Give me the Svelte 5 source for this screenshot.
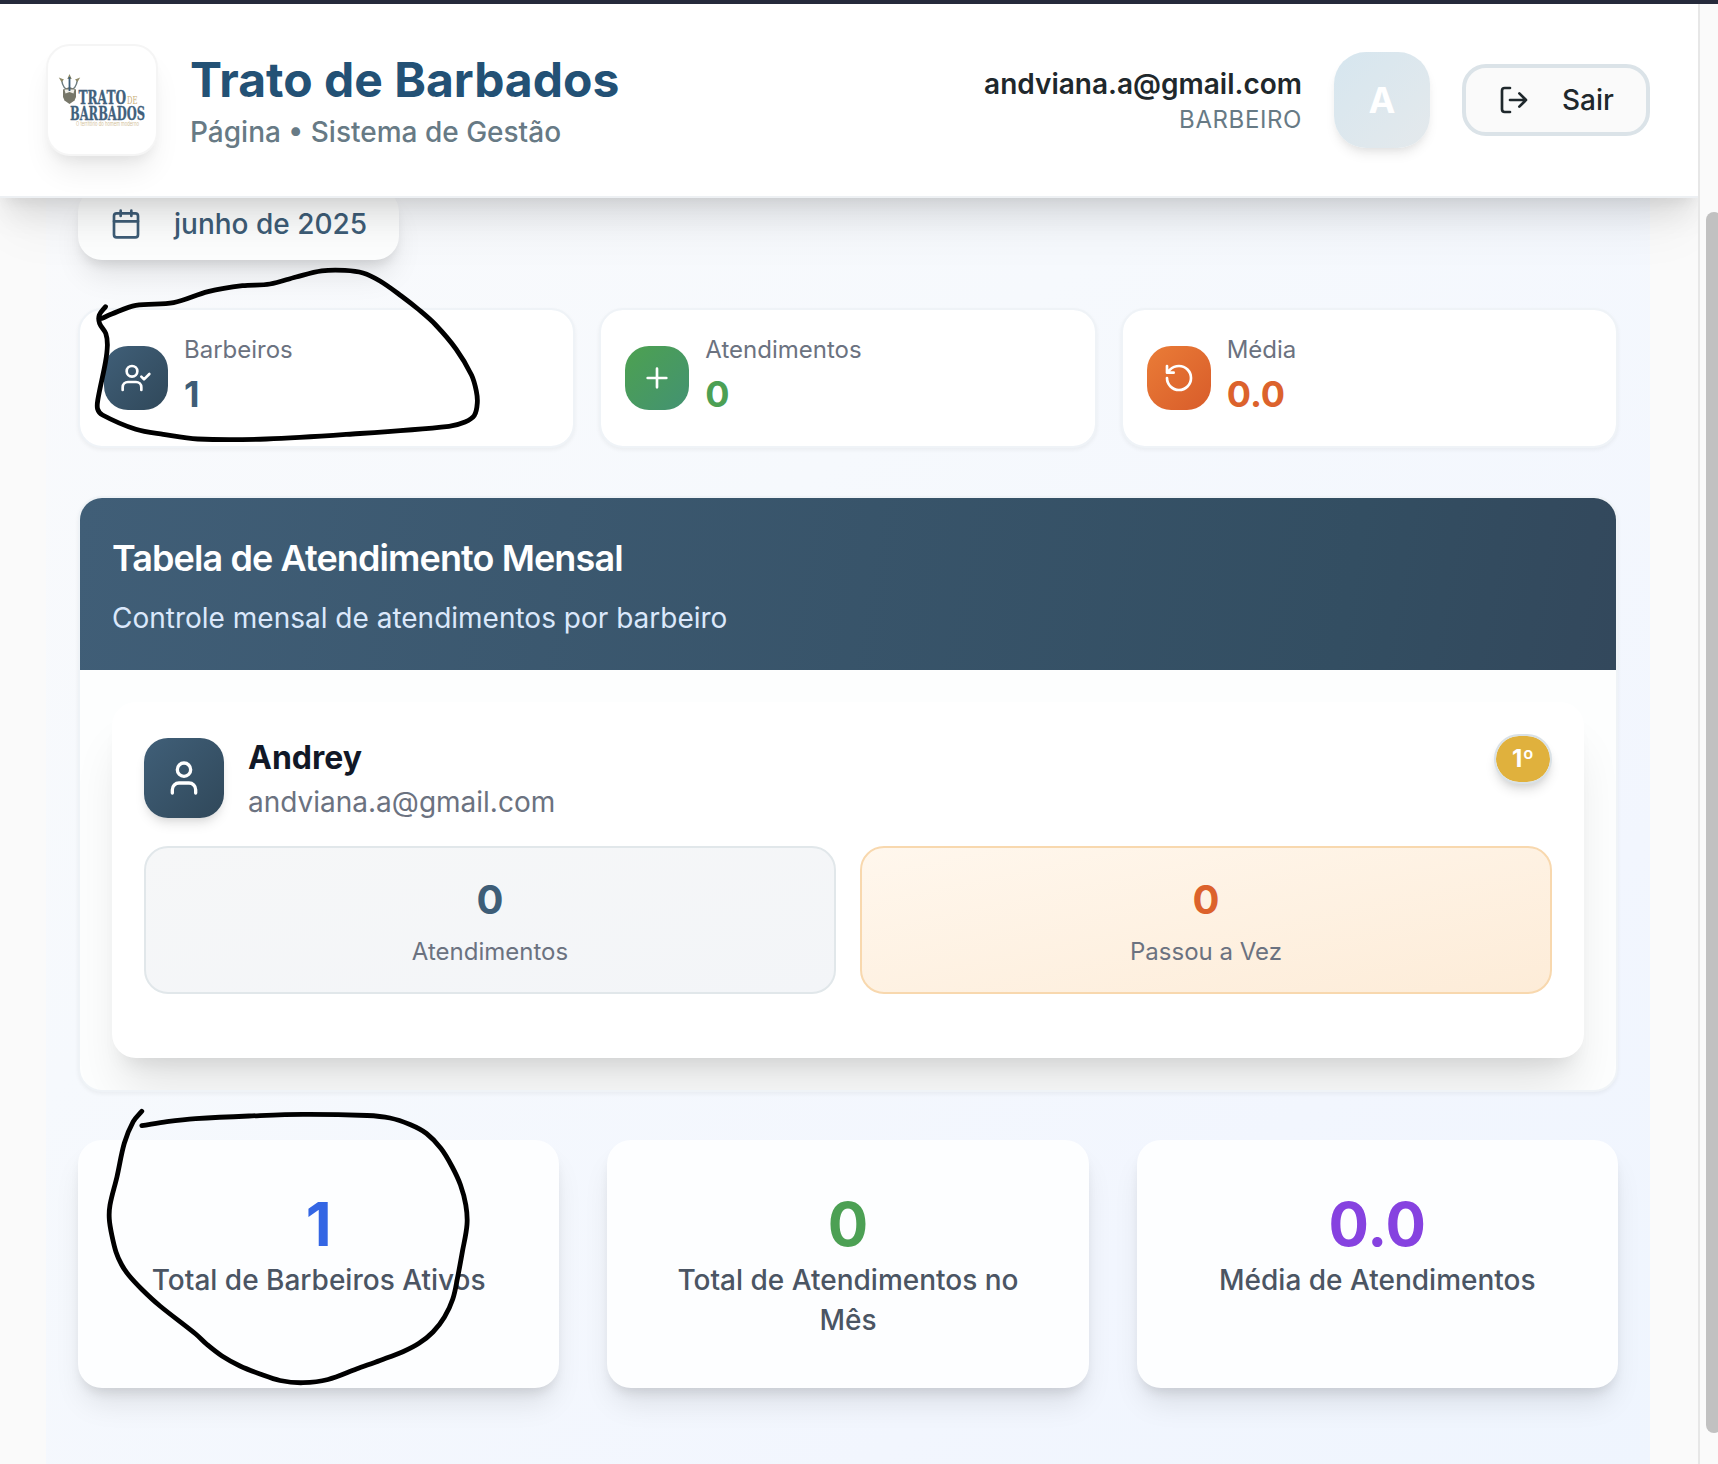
<script>
  const stats = [
    { label: 'Barbeiros', value: '1', tone: 'navy', icon: 'userCheck' },
    { label: 'Atendimentos', value: '0', tone: 'green', icon: 'plus' },
    { label: 'Média', value: '0.0', tone: 'orange', icon: 'rotate' }
  ];

  const totals = [
    { label: 'Total de Barbeiros Ativos', value: '1', tone: 'blue' },
    { label: 'Total de Atendimentos no Mês', value: '0', tone: 'green' },
    { label: 'Média de Atendimentos', value: '0.0', tone: 'purple' }
  ];

  // Freehand pen strokes drawn over the page
  const strokes = [
    [[105.5, 306.7], [99.3, 315], [99.6, 323.5], [105.8, 333.5], [107.4, 345], [105.5, 362], [97.8, 400], [97.6, 409], [102.5, 415], [135.8, 429.3], [163.3, 434.3], [197.7, 439], [266.6, 439], [352.7, 434], [449, 426.3], [465, 422], [474.3, 415.500], [477.3, 403], [476.3, 391], [471.5, 375], [456, 349], [435.3, 324.500], [418, 309], [401, 295.700], [380, 281], [363, 273], [345, 270.4], [321.7, 270.9], [296, 277], [270, 284], [242.5, 285.7], [208, 291.7], [173.6, 302.7], [135.8, 305.3], [111.7, 314], [102, 318.3]],
    [[141.8, 1111.3], [133.2, 1121.7], [124.3, 1143.3], [117, 1176.7], [110, 1205], [109.3, 1219], [111.8, 1235], [116, 1252], [121.500, 1264.500], [129, 1275.500], [142, 1289.500], [160, 1306], [195.7, 1334], [207, 1344.500], [222, 1356], [240, 1366], [260, 1374], [280, 1380.500], [303, 1382.700], [328, 1379.500], [356.4, 1369], [380, 1360.500], [402.9, 1351.7], [419, 1343.300], [433, 1332], [444.500, 1317], [452.800, 1299], [457.500, 1278], [462.500, 1251], [467, 1224.500], [465.800, 1205], [460.500, 1185], [452, 1166.500], [441, 1148.500], [426.500, 1133.500], [410, 1124.500], [390, 1118], [367, 1115.500], [302.9, 1114.300], [249, 1116], [195.7, 1118.7], [167, 1121.700], [141.8, 1125.7]]
  ];

  // Smooth curve through the points (Catmull-Rom converted to cubic Béziers)
  function smooth(p) {
    let d = `M${p[0][0]} ${p[0][1]}`;
    for (let i = 0; i < p.length - 1; i++) {
      const a = p[i - 1] ?? p[i];
      const b = p[i];
      const c = p[i + 1];
      const e = p[i + 2] ?? c;
      const len = Math.hypot(c[0] - b[0], c[1] - b[1]);
      const t1 = len / (len + Math.hypot(b[0] - a[0], b[1] - a[1]));
      const t2 = len / (len + Math.hypot(e[0] - c[0], e[1] - c[1]));
      const c1 = [b[0] + ((c[0] - a[0]) * t1) / 3, b[1] + ((c[1] - a[1]) * t1) / 3];
      const c2 = [c[0] - ((e[0] - b[0]) * t2) / 3, c[1] - ((e[1] - b[1]) * t2) / 3];
      d += `C${c1[0].toFixed(1)} ${c1[1].toFixed(1)} ${c2[0].toFixed(1)} ${c2[1].toFixed(1)} ${c[0]} ${c[1]}`;
    }
    return d;
  }
</script>

<div class="window">
  <div class="viewport">
    <header>
      <div class="brand">
        <div class="logo">
          <svg viewBox="0 0 108 108" role="img" aria-label="Trato de Barbados">
            <path d="M13.500 33.500q1.500 10.500 8 10.500t8-10.500" fill="none" stroke="#6d7c80" stroke-width="1.500" />
            <path d="M21.500 28l-2.200 5h4.400zM10.800 31.500l5.200 2-2.500 2.500zM32.200 31.500l-5.200 2 2.500 2.500z" fill="#8f8a68" />
            <path d="M15 43.500l6.500-2.500 6.500 2.500v7.500l-1.500 3.500-5 3.500-5-3.500-1.500-3.500z" fill="#77776a" />
            <path d="M16.500 43.500h10l-1 4-4-1.500-4 1.500z" fill="#efeee8" />
            <path d="M21.500 31v14" stroke="#3f5f7a" stroke-width="1.800" />
            <g font-family="'DejaVu Serif', serif" font-weight="700" fill="#41617c" stroke="#41617c" stroke-width="0.300">
              <text x="30.500" y="58" font-size="18" textLength="47.500" lengthAdjust="spacingAndGlyphs">TRATO</text>
              <text x="22" y="74.400" font-size="18.500" textLength="75" lengthAdjust="spacingAndGlyphs">BARBADOS</text>
            </g>
            <text x="79" y="58" font-size="11" font-family="'DejaVu Serif', serif" fill="#c9ae7a" textLength="10.500" lengthAdjust="spacingAndGlyphs">DE</text>
            <text x="28" y="80" font-size="5.500" font-family="Inter, sans-serif" fill="#d2c199" textLength="63" lengthAdjust="spacingAndGlyphs">O território do homem moderno</text>
          </svg>
        </div>
        <div class="titles">
          <h1>Trato de Barbados</h1>
          <p>Página • Sistema de Gestão</p>
        </div>
      </div>
      <div class="account">
        <div class="who">
          <strong>andviana.a@gmail.com</strong>
          <span>BARBEIRO</span>
        </div>
        <div class="avatar">A</div>
        <button>
          <svg class="icon" viewBox="0 0 24 24">
            <path d="M9 21H5a2 2 0 0 1-2-2V5a2 2 0 0 1 2-2h4M16 17l5-5-5-5M21 12H9" />
          </svg>
          Sair
        </button>
      </div>
    </header>

    <main>
      <div class="month">
        <svg class="icon" viewBox="0 0 24 24">
          <rect x="3" y="4" width="18" height="18" rx="2" />
          <path d="M16 2v4M8 2v4M3 10h18" />
        </svg>
        junho de 2025
      </div>

      <section class="stats">
        {#each stats as s}
          <div class="stat">
            <div class="chip {s.tone}">
              <svg class="icon" viewBox="0 0 24 24">
                {#if s.icon === 'userCheck'}
                  <path d="M16 21v-2a4 4 0 0 0-4-4H6a4 4 0 0 0-4 4v2M16 11l2 2 4-4" />
                  <circle cx="9" cy="7" r="4" />
                {:else if s.icon === 'plus'}
                  <path d="M5 12h14M12 5v14" />
                {:else}
                  <path d="M3 12a9 9 0 1 0 9-9 9.750 9.750 0 0 0-6.740 2.740L3 8M3 3v5h5" />
                {/if}
              </svg>
            </div>
            <div>
              <div class="stat-label">{s.label}</div>
              <div class="stat-value text-{s.tone}">{s.value}</div>
            </div>
          </div>
        {/each}
      </section>

      <section class="table">
        <div class="table-head">
          <h2>Tabela de Atendimento Mensal</h2>
          <p>Controle mensal de atendimentos por barbeiro</p>
        </div>
        <div class="table-body">
          <article>
            <div class="person">
              <div class="person-icon">
                <svg class="icon" viewBox="0 0 24 24">
                  <path d="M19 21v-2a4 4 0 0 0-4-4H9a4 4 0 0 0-4 4v2" />
                  <circle cx="12" cy="7" r="4" />
                </svg>
              </div>
              <div class="person-text">
                <h3>Andrey</h3>
                <p>andviana.a@gmail.com</p>
              </div>
              <span class="rank">1º</span>
            </div>
            <div class="counts">
              <div class="count gray">
                <b>0</b>
                <span>Atendimentos</span>
              </div>
              <div class="count peach">
                <b>0</b>
                <span>Passou a Vez</span>
              </div>
            </div>
          </article>
        </div>
      </section>

      <section class="totals">
        {#each totals as t}
          <div class="total">
            <b class="text-{t.tone}">{t.value}</b>
            <span>{t.label}</span>
          </div>
        {/each}
      </section>
    </main>
  </div>
  <div class="scrollbar"><div class="thumb"></div></div>

  <svg class="ink" viewBox="0 0 1718 1464" aria-hidden="true">
    {#each strokes as s}
      <path d={smooth(s)} />
    {/each}
  </svg>
</div>

<style>
  :global(body) {
    background: #fafafa;
  }

  .window,
  .window * {
    box-sizing: border-box;
  }

  .window {
    --lift: 0 20px 30px -6px rgba(0, 0, 0, 0.1), 0 8px 12px -4px rgba(0, 0, 0, 0.1);
    position: relative;
    display: flex;
    width: 1718px;
    height: 1464px;
    overflow: hidden;
    border-top: 4px solid #252a3b;
    background: #fafafa;
    font-family: Inter, sans-serif;
    color: #1f2a30;
  }

  h1, h2, h3, p {
    margin: 0;
  }

  .icon {
    display: block;
    flex: none;
    width: 32px;
    height: 32px;
    fill: none;
    stroke: currentColor;
    stroke-width: 2;
    stroke-linecap: round;
    stroke-linejoin: round;
  }

  .viewport {
    flex: none;
    display: flex;
    flex-direction: column;
    width: 1698px;
    height: 1460px;
    overflow: hidden;
  }

  header {
    position: relative;
    z-index: 2;
    flex: none;
    display: flex;
    align-items: center;
    justify-content: space-between;
    height: 194px;
    padding: 0 48px 0 46px;
    background: #fff;
    border-bottom: 2px solid #edf0f3;
    box-shadow: 0 40px 50px -10px rgba(0, 0, 0, 0.05), 0 20px 30px -6px rgba(0, 0, 0, 0.1), 0 8px 12px -4px rgba(0, 0, 0, 0.05);
  }

  .brand {
    display: flex;
    align-items: center;
    gap: 32px;
  }

  .logo {
    width: 112px;
    height: 112px;
    border: 2px solid #f5f5f5;
    border-radius: 24px;
    background: #fff;
    box-shadow: 0 20px 30px -6px rgba(0, 0, 0, 0.08), 0 8px 12px -4px rgba(0, 0, 0, 0.06);
  }

  .logo svg {
    display: block;
    width: 108px;
    height: 108px;
  }

  .titles {
    padding-top: 2px;
  }

  h1 {
    font-size: 48px;
    line-height: 60px;
    font-weight: 700;
    color: #235175;
  }

  .titles p {
    margin-top: 2px;
    font-size: 28px;
    line-height: 40px;
    font-weight: 500;
    color: #677a85;
  }

  .account {
    display: flex;
    align-items: center;
    gap: 32px;
  }

  .who {
    display: flex;
    flex-direction: column;
    align-items: flex-end;
  }

  .who strong {
    font-size: 28px;
    line-height: 40px;
    font-weight: 600;
    color: #1f282c;
  }

  .who span {
    font-size: 24px;
    line-height: 32px;
    letter-spacing: 0.6px;
    color: #677a85;
  }

  .avatar {
    display: grid;
    place-items: center;
    width: 96px;
    height: 96px;
    border-radius: 32px;
    background: linear-gradient(135deg, #d6e6ef, #e4e9ec);
    box-shadow: 0 8px 12px -2px rgba(0, 0, 0, 0.08), 0 4px 8px -4px rgba(0, 0, 0, 0.08);
    font-size: 36px;
    font-weight: 700;
    color: #fff;
  }

  button {
    display: flex;
    align-items: center;
    gap: 32px;
    width: 188px;
    height: 72px;
    padding: 0 28px 0 32px;
    border: 4px solid #dbe3e8;
    border-radius: 24px;
    background: #fafafa;
    font: 500 28px/40px Inter, sans-serif;
    color: #1f282c;
  }

  main {
    flex: none;
    width: 1604px;
    height: 1290px;
    margin: -10px 0 0 46px;
    padding: 0 32px;
    background: linear-gradient(to bottom right, #f9fafc 0%, #f6f9fd 35%, #f2f6fe 75%, #eff5fe 100%);
  }

  .month {
    display: flex;
    align-items: center;
    gap: 32px;
    width: 321px;
    height: 72px;
    padding: 0 32px;
    border-radius: 24px;
    background: #fdfefe;
    box-shadow: var(--lift);
    font-size: 28px;
    font-weight: 500;
    white-space: nowrap;
    color: #3e5d77;
  }

  .stats {
    display: grid;
    grid-template-columns: repeat(3, 1fr);
    gap: 24px;
    margin-top: 48px;
  }

  .stat {
    display: flex;
    align-items: center;
    gap: 16px;
    height: 140px;
    padding: 0 24px;
    border: 2px solid #eff3f7;
    border-radius: 24px;
    background: #fff;
    background-clip: padding-box;
    box-shadow: 0 2px 4px rgba(0, 0, 0, 0.05);
  }

  .chip {
    display: grid;
    place-items: center;
    width: 64px;
    height: 64px;
    border-radius: 24px;
    color: #fff;
  }

  .chip.navy,
  .person-icon {
    background: linear-gradient(135deg, #405f78, #30485a);
  }

  .chip.green {
    background: linear-gradient(135deg, #4da150, #439272);
  }

  .chip.orange {
    background: linear-gradient(135deg, #ea7c37, #d85c2a);
  }

  .stat-label {
    font-size: 24px;
    line-height: 32px;
    color: #6b7280;
  }

  .stat-value {
    font-size: 36px;
    line-height: 57px;
    font-weight: 700;
  }

  .text-navy { color: #3e5d77; }
  .text-green { color: #4ca054; }
  .text-orange { color: #dc622c; }
  .text-blue { color: #3466e4; }
  .text-purple { color: #8642e0; }

  .table {
    height: 596px;
    margin-top: 48px;
    border: 2px solid #eff3f7;
    border-radius: 24px;
    overflow: hidden;
    background: #fdfefe;
    box-shadow: 0 2px 4px rgba(0, 0, 0, 0.05);
  }

  .table-head {
    height: 172px;
    padding: 32px;
    background: linear-gradient(100deg, #405e77 0%, #334e62 82%, #33485c 100%);
  }

  h2 {
    font-size: 36px;
    line-height: 56px;
    font-weight: 600;
    letter-spacing: -0.025em;
    color: #fff;
  }

  .table-head p {
    margin-top: 12px;
    font-size: 28px;
    line-height: 41px;
    color: #dbe8fb;
  }

  .table-body {
    padding: 32px;
  }

  article {
    height: 356px;
    padding: 32px;
    border-radius: 24px;
    background: #fff;
    box-shadow: 0 40px 50px -10px rgba(0, 0, 0, 0.1), 0 16px 20px -12px rgba(0, 0, 0, 0.1);
  }

  .person {
    display: flex;
    align-items: center;
    height: 88px;
  }

  .person-icon {
    display: grid;
    place-items: center;
    width: 80px;
    height: 80px;
    border-radius: 24px;
    box-shadow: 0 8px 12px -2px rgba(0, 0, 0, 0.1), 0 4px 8px -4px rgba(0, 0, 0, 0.1);
    color: #fff;
  }

  .person-icon .icon {
    width: 40px;
    height: 40px;
  }

  .person-text {
    flex: 1;
    margin-left: 24px;
  }

  h3 {
    font-size: 32px;
    line-height: 48px;
    font-weight: 700;
    color: #111827;
  }

  .person-text p {
    font-size: 28px;
    line-height: 40px;
    color: #6b7280;
  }

  .rank {
    align-self: flex-start;
    display: grid;
    place-items: center;
    width: 58px;
    height: 50px;
    border: 2px solid #d9e1e6;
    border-radius: 25px;
    background: #e0b13d;
    background-clip: padding-box;
    box-shadow: 0 8px 12px -2px rgba(0, 0, 0, 0.12), 0 4px 8px -4px rgba(0, 0, 0, 0.12);
    font-size: 24px;
    line-height: 32px;
    font-weight: 700;
    color: #fff;
  }

  .counts {
    display: grid;
    grid-template-columns: 1fr 1fr;
    gap: 24px;
    margin-top: 24px;
  }

  .count {
    display: flex;
    flex-direction: column;
    align-items: center;
    gap: 8px;
    height: 148px;
    padding-top: 24px;
    border: 2px solid;
    border-radius: 24px;
  }

  .count.gray {
    border-color: #e1e7ea;
    background: linear-gradient(to bottom right, #f6f7f8, #f3f5f8);
  }

  .count.peach {
    border-color: #f8d8ae;
    background: linear-gradient(to bottom right, #fff7ed, #fdecd8);
  }

  .count b {
    font-size: 40px;
    line-height: 56px;
    font-weight: 700;
    color: #3e5d77;
  }

  .count.peach b {
    color: #dc622c;
  }

  .count span {
    font-size: 24px;
    line-height: 32px;
    color: #6b7280;
  }

  .totals {
    display: grid;
    grid-template-columns: repeat(3, 1fr);
    gap: 48px;
    margin-top: 48px;
  }

  .total {
    display: flex;
    flex-direction: column;
    align-items: center;
    height: 248px;
    padding: 48px;
    border-radius: 24px;
    background: #fdfeff;
    box-shadow: var(--lift);
    text-align: center;
  }

  .total b {
    font-size: 60px;
    line-height: 72px;
    font-weight: 700;
  }

  .total span {
    font-size: 28px;
    line-height: 40px;
    font-weight: 500;
    color: #4b5563;
  }

  .scrollbar {
    flex: none;
    width: 20px;
    padding: 208px 0 0 6px;
    border-left: 2px solid #e7e7e7;
    background: #fafafa;
    overflow: hidden;
  }

  .thumb {
    width: 16px;
    height: 1221px;
    border-radius: 8px;
    background: #c1c1c1;
  }

  /* The pen layer floats above the whole window */
  .ink {
    position: absolute;
    top: -4px;
    left: 0;
    width: 1718px;
    height: 1464px;
    fill: none;
    stroke: #000;
    stroke-width: 4.800;
    stroke-linecap: round;
    stroke-linejoin: round;
    pointer-events: none;
  }
</style>
